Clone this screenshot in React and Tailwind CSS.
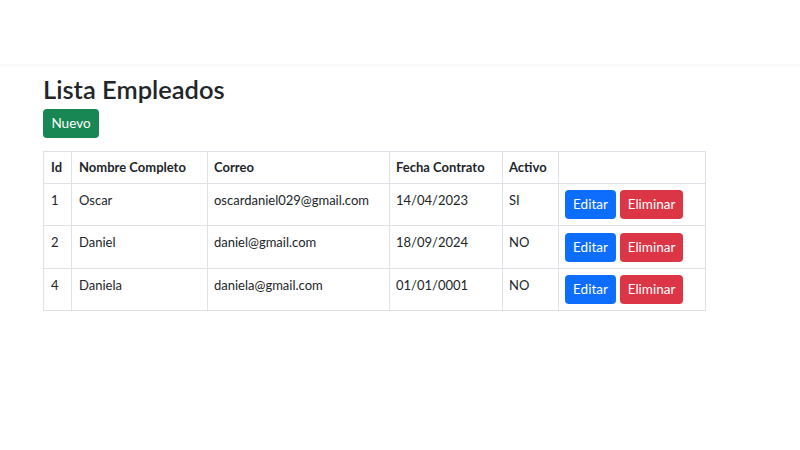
const empleados = [
    { id: 1, nombre: "Oscar", correo: "oscardaniel029@gmail.com", fecha: "14/04/2023", activo: "SI" },
    { id: 2, nombre: "Daniel", correo: "daniel@gmail.com", fecha: "18/09/2024", activo: "NO" },
    { id: 4, nombre: "Daniela", correo: "daniela@gmail.com", fecha: "01/01/0001", activo: "NO" },
];

export default function App() {
    return (
        <div className="min-h-[450px] bg-white text-[#212529] font-['Lato',sans-serif]">
            <nav className="h-[64px] bg-white shadow-[0_1px_4px_rgba(0,0,0,0.06)]"></nav>
            <main className="px-[43px] pt-[9px]">
                <h2 className="text-[25.5px] font-semibold leading-[32px] mb-[4px]">Lista Empleados</h2>
                <button className="h-[29px] w-[56px] rounded bg-[#198754] text-white text-[13.5px]">Nuevo</button>
                <table className="mt-[13px] border-collapse w-[662px] text-[13px] table-fixed whitespace-nowrap">
                    <colgroup>
                        <col className="w-[28px]" />
                        <col className="w-[136px]" />
                        <col className="w-[182px]" />
                        <col className="w-[113px]" />
                        <col className="w-[56px]" />
                        <col className="w-[147px]" />
                    </colgroup>
                    <thead>
                        <tr className="h-[32px]">
                            <th className="border border-[#dee2e6] pl-[7px] text-left font-bold">Id</th>
                            <th className="border border-[#dee2e6] pl-[7px] text-left font-bold">Nombre Completo</th>
                            <th className="border border-[#dee2e6] pl-[6px] text-left font-bold">Correo</th>
                            <th className="border border-[#dee2e6] pl-[6px] text-left font-bold">Fecha Contrato</th>
                            <th className="border border-[#dee2e6] pl-[6px] text-left font-bold">Activo</th>
                            <th className="border border-[#dee2e6] px-2"></th>
                        </tr>
                    </thead>
                    <tbody>
                        {empleados.map((e, i) => (
                            <tr key={e.id} className={i === 1 ? "h-[43px]" : "h-[42px]"}>
                                <td className="border border-[#dee2e6] pl-[7px] pt-2 align-top leading-[17px]">{e.id}</td>
                                <td className="border border-[#dee2e6] pl-[7px] pt-2 align-top leading-[17px]">{e.nombre}</td>
                                <td className="border border-[#dee2e6] pl-[6px] pt-2 align-top leading-[17px]">{e.correo}</td>
                                <td className="border border-[#dee2e6] pl-[6px] pt-2 align-top leading-[17px]">{e.fecha}</td>
                                <td className="border border-[#dee2e6] pl-[6px] pt-2 align-top leading-[17px]">{e.activo}</td>
                                <td className="border border-[#dee2e6] pl-[6px] align-middle">
                                    <div className="flex gap-[4px] text-[13.5px]">
                                        <button className="h-[29px] w-[51px] rounded bg-[#0d6efd] text-white">Editar</button>
                                        <button className="h-[29px] w-[63px] rounded bg-[#dc3545] text-white">Eliminar</button>
                                    </div>
                                </td>
                            </tr>
                        ))}
                    </tbody>
                </table>
            </main>
        </div>
    )
}
